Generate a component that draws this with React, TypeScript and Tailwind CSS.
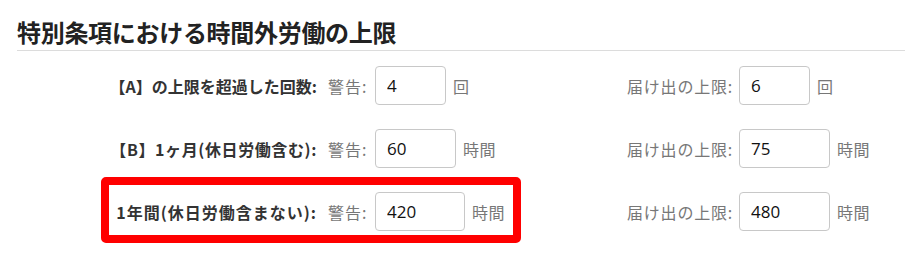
import React from "react";

const jp = { fontFamily: '"Noto Sans CJK JP", "Noto Sans", sans-serif' };
const num = { fontFamily: '"Open Sans", "Noto Sans CJK JP", sans-serif' };

function Field({ value, w }: { value: string; w: string }) {
  return (
    <input
      readOnly
      value={value}
      style={num}
      className={`${w} h-[39px] border border-[#c8c8c8] rounded-[4px] pl-[11px] text-[17px] text-[#111] bg-white outline-none`}
    />
  );
}

function LeftContent({ label, value, w, unit, track }: { label: React.ReactNode; value: string; w: string; unit: string; track: string }) {
  return (
    <div className="flex items-center">
      <div className={`w-[208px] text-right font-bold text-[16px] ${track} text-[#333] whitespace-nowrap`}>{label}</div>
      <span className="ml-[11px] w-[40px] text-[16px] tracking-[1px] text-[#777] whitespace-nowrap">警告:</span>
      <div className="ml-[7px]">
        <Field value={value} w={w} />
      </div>
      <span className="ml-[7px] text-[16px] tracking-[0.5px] text-[#777]">{unit}</span>
    </div>
  );
}

function Right({ value, w, unit }: { value: string; w: string; unit: string }) {
  return (
    <div className="ml-[106px] flex items-center pt-[15px]">
      <span className="text-[16px] tracking-[0.8px] text-[#777] w-[112px] whitespace-nowrap">届け出の上限:</span>
      <Field value={value} w={w} />
      <span className="ml-[7px] text-[16px] tracking-[0.5px] text-[#777]">{unit}</span>
    </div>
  );
}

export default function App() {
  return (
    <div style={jp} className="w-[905px] h-[257px] bg-white overflow-hidden">
      <div className="ml-[17px] mt-[14px] h-[37px] border-b border-[#dcdcdc] leading-[36px] text-[24px] font-bold text-[#222] tracking-[-0.3px]">
        特別条項における時間外労働の上限
      </div>
      <div className="flex items-start h-[63px]">
        <div className="w-[420px] ml-[101px] pl-[8px] pt-[15px]">
          <LeftContent
            label={
              <>
                <span className="-ml-[6px]">【</span>A】の上限を超過した回数:
              </>
            }
            track="tracking-[0px]"
            value="4"
            w="w-[71px]"
            unit="回"
          />
        </div>
        <Right value="6" w="w-[71px]" unit="回" />
      </div>
      <div className="flex items-start h-[63px]">
        <div className="w-[420px] ml-[101px] pl-[8px] pt-[15px]">
          <LeftContent label="【B】1ヶ月(休日労働含む):" track="tracking-[0.6px]" value="60" w="w-[81px]" unit="時間" />
        </div>
        <Right value="75" w="w-[91px]" unit="時間" />
      </div>
      <div className="flex items-start">
        <div className="w-[420px] ml-[101px] border-[8px] border-[#ff0000] rounded-[5px] pt-[7px] pb-[4px]">
          <LeftContent label="1年間(休日労働含まない):" track="tracking-[1px]" value="420" w="w-[90px]" unit="時間" />
        </div>
        <Right value="480" w="w-[91px]" unit="時間" />
      </div>
    </div>
  );
}
